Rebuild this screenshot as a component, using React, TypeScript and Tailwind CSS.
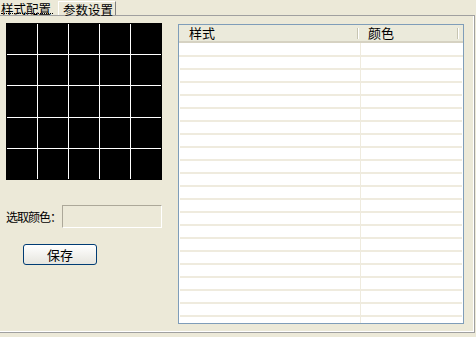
const font = { fontFamily: '"Noto Sans CJK SC", "DejaVu Sans", sans-serif' };

function ColorGrid() {
  return (
    <div className="grid h-[157px] w-[156px] grid-cols-5 grid-rows-5 gap-px border border-black bg-white">
      {Array.from({ length: 25 }).map((_, i) => (
        <div key={i} className="bg-black" />
      ))}
    </div>
  );
}

function StyleList() {
  const rows = Array.from({ length: 21 });
  return (
    <div className="relative mt-[8px] flex h-[300px] w-[286px] flex-col border border-[#7f9db9] bg-white">
      <div className="flex h-[18px] shrink-0 border-b-2 border-[#d6d2c2] bg-[#ebeadb] text-[13px] leading-[16px] text-black">
        <div className="relative w-[180px] pl-[10px]">
          样式
          <span className="absolute right-[0px] top-[3px] h-[11px] w-[2px] border-l border-r border-l-[#c7c5b2] border-r-white" />
        </div>
        <div className="relative w-[100px] pl-[9px]">
          颜色
          <span className="absolute right-[0px] top-[3px] h-[11px] w-[2px] border-l border-r border-l-[#c7c5b2] border-r-white" />
        </div>
      </div>
      <div className="relative flex-1 overflow-hidden">
        <div className="absolute bottom-0 left-[181px] top-0 w-px bg-[#efebde]" />
        <div className="h-[14px] border-b-2 border-[#efebde]" />
        {rows.map((_, i) => (
          <div key={i} className="mx-[1px] h-[13px] border-b-2 border-[#efebde]" />
        ))}
      </div>
    </div>
  );
}

export default function App() {
  return (
    <div className="h-[337px] w-[476px] overflow-hidden bg-[#ece9d8] text-[13px] text-black" style={font}>
      <div className="flex h-[15px] items-start">
        <div className="relative z-10 h-[15px] w-[58px] whitespace-nowrap pl-[1px] text-[12.5px]">
          <span className="block h-[17px] leading-[17px]">样式配置</span>
          <div className="absolute left-[1px] top-[13px] w-[52px] border-b border-dotted border-black" />
        </div>
        <div className="mt-[1px] h-[14px] w-[58px] whitespace-nowrap border-l border-r border-t border-l-white border-r-[#808080] border-t-white pl-[4px] text-[12.5px]">
          <span className="block h-[15px] leading-[15px]">参数设置</span>
        </div>
      </div>
      <div className="flex h-[318px] w-[475px] border-b border-r border-t border-b-[#a0a0a0] border-r-[#a0a0a0] border-t-[#a0a0a0]">
        <div className="flex h-full w-full border-b border-r border-b-white border-r-white">
          <div className="w-[178px] pl-[6px] pt-[7px]">
            <ColorGrid />
            <div className="mt-[25px] flex h-[23px] items-center">
              <span className="w-[56px] whitespace-nowrap text-[12px] leading-[14px] tracking-[-1px]">选取颜色：</span>
              <div className="h-[23px] w-[100px] border border-b-white border-l-[#aca899] border-r-white border-t-[#aca899]" />
            </div>
            <button
              type="button"
              className="ml-[17px] mt-[16px] h-[21px] w-[74px] rounded-[3px] border border-[#003c74] bg-gradient-to-b from-white to-[#e6e5de] text-[13px] leading-[18px] text-black"
            >
              保存
            </button>
          </div>
          <StyleList />
        </div>
      </div>
    </div>
  );
}
